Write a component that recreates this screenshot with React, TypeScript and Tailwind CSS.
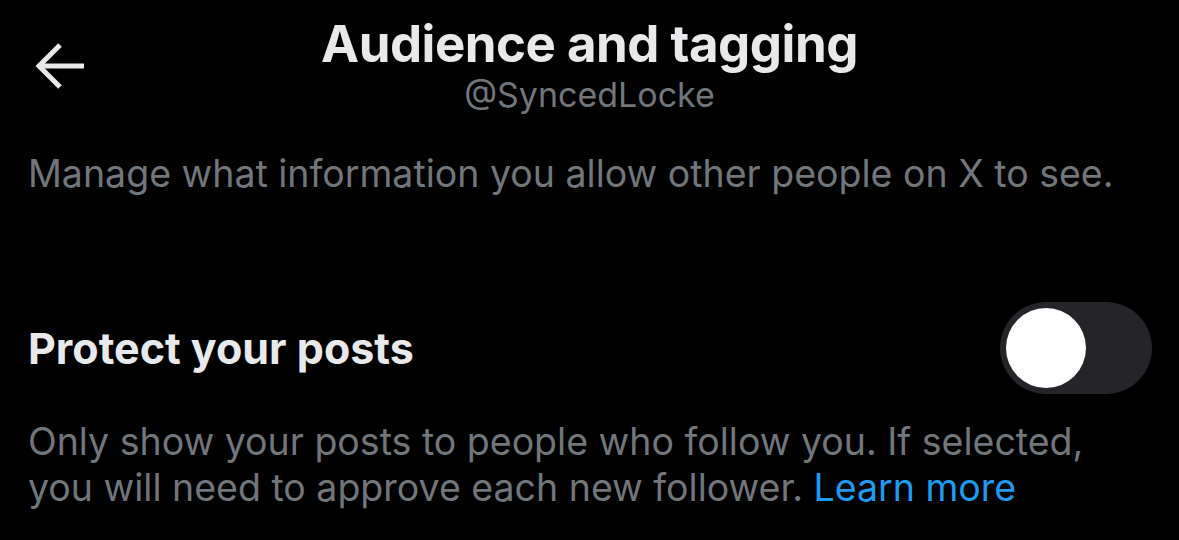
import React from 'react';

const BackArrow: React.FC = () => (
    <svg width="52" height="48" viewBox="0 0 52 48" fill="none" stroke="#e7e9ea" strokeWidth="5" strokeLinecap="butt">
        <path d="M50 24H6" />
        <path d="M26 3L5 24l21 21" />
    </svg>
);

const Toggle: React.FC<{ on?: boolean }> = ({ on = false }) => (
    <div className={`w-[152px] h-[92px] rounded-full p-[6px] flex items-center ${on ? 'bg-[#1d9bf0] justify-end' : 'bg-[#252529] justify-start'}`}>
        <div className="w-[80px] h-[80px] rounded-full bg-white" />
    </div>
);

export default function App() {
    return (
        <div className="w-[1179px] h-[540px] bg-black overflow-hidden" style={{ fontFamily: 'Inter, Roboto, "Liberation Sans", sans-serif' }}>
            {/* Header */}
            <div className="relative h-[130px] flex flex-col items-center pt-[12px]">
                <div className="absolute left-[34px] top-[42px]">
                    <BackArrow />
                </div>
                <h1 className="text-[51px] leading-[64px] font-bold text-[#e7e9ea] tracking-[-0.5px]">Audience and tagging</h1>
                <p className="text-[34px] leading-[38px] text-[#71767b]">@SyncedLocke</p>
            </div>

            <p className="pt-[20px] px-[28px] text-[37.5px] leading-[48px] text-[#71767b]">
                Manage what information you allow other people on X to see.
            </p>

            {/* Protect posts */}
            <div className="mt-[104px] pl-[28px] pr-[27px] flex items-center justify-between">
                <span className="text-[43px] font-bold text-[#e7e9ea]">Protect your posts</span>
                <Toggle />
            </div>

            <p className="mt-[25px] px-[28px] text-[37.5px] leading-[46px] text-[#71767b]">
                Only show your posts to people who follow you. If selected,<br />
                you will need to approve each new follower.{' '}
                <span className="text-[#1d9bf0]">Learn more</span>
            </p>
        </div>
    );
}
